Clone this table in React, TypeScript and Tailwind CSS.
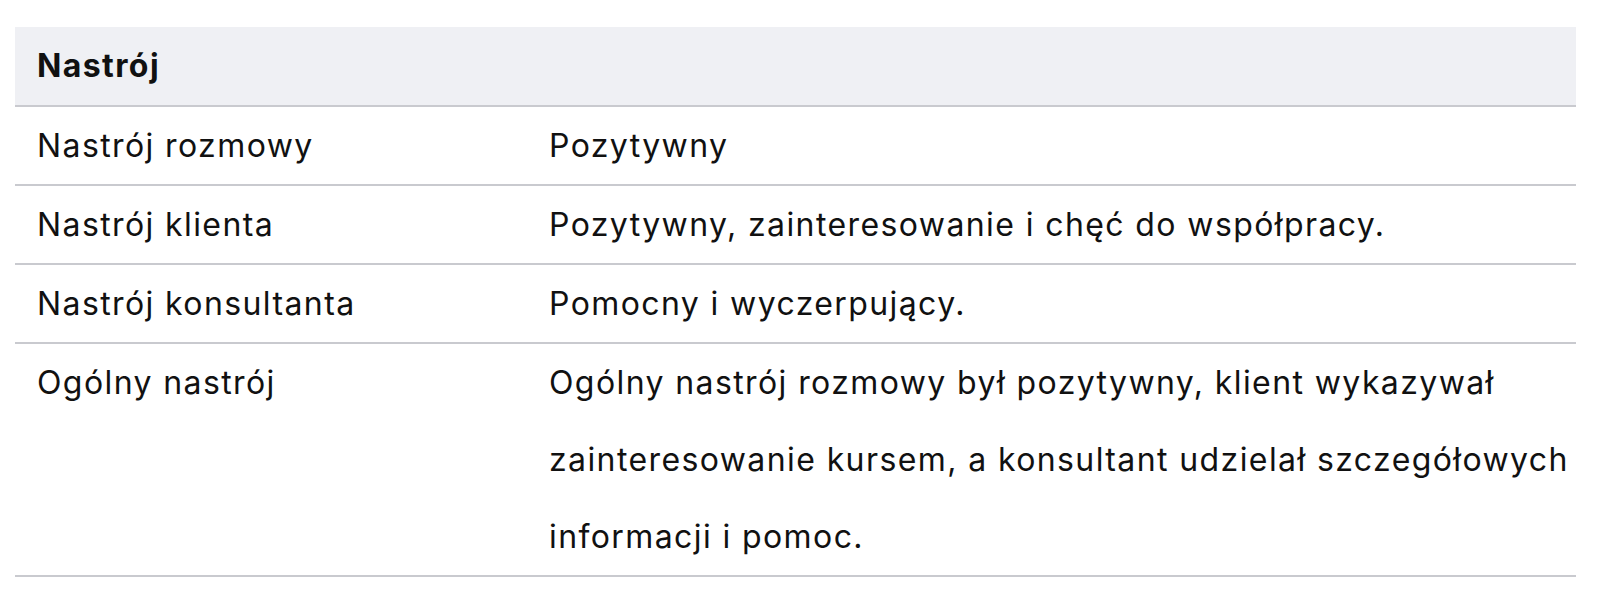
import React from "react";

interface MoodRow {
  label: string;
  lines: string[];
}

const rows: MoodRow[] = [
  { label: "Nastrój rozmowy", lines: ["Pozytywny"] },
  {
    label: "Nastrój klienta",
    lines: ["Pozytywny, zainteresowanie i chęć do współpracy."],
  },
  { label: "Nastrój konsultanta", lines: ["Pomocny i wyczerpujący."] },
  {
    label: "Ogólny nastrój",
    lines: [
      "Ogólny nastrój rozmowy był pozytywny, klient wykazywał",
      "zainteresowanie kursem, a konsultant udzielał szczegółowych",
      "informacji i pomoc.",
    ],
  },
];

const App = () => {
  return (
    <div className="min-h-[594px] bg-white pt-[27px] pl-[15px] font-['Inter','Noto_Sans',sans-serif] text-[#111111] tracking-[1.4px]">
      <table className="w-[1561px] border-collapse text-left">
        <thead>
          <tr className="bg-[#eff0f4] border-b-2 border-[#c9cacf]">
            <th colSpan={2} className="h-[79px] px-[22px] text-[32px] font-bold align-middle">
              Nastrój
            </th>
          </tr>
        </thead>
        <tbody>
          {rows.map((row) => (
            <tr key={row.label} className="border-b-2 border-[#c9cacf]">
              <td className="w-[534px] px-[22px] py-0 align-top text-[32px] leading-[77px]">
                {row.label}
              </td>
              <td className="py-0 align-top text-[32px] leading-[77px]">
                {row.lines.map((line) => (
                  <span key={line} className="block whitespace-nowrap">
                    {line}
                  </span>
                ))}
              </td>
            </tr>
          ))}
        </tbody>
      </table>
    </div>
  );
};

export default App;
